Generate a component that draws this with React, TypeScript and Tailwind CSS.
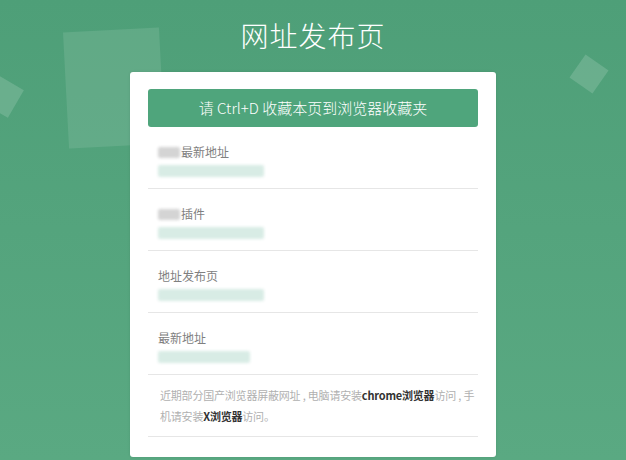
import React from "react";

const Blur = ({ w, cls = "" }: { w: number; cls?: string }) => (
  <span
    className={"inline-block align-middle rounded-[2px] blur-[1.5px] " + cls}
    style={{ width: w }}
  />
);

function Row({ label, pre, urlW }: { label: string; pre: number; urlW: number }) {
  return (
    <div className="px-[10px] pt-[18px] pb-[11px] border-b border-[#e6e6e6]">
      <div className="flex items-center h-[14px] text-[12px] leading-[14px] text-[#808080]">
        {pre > 0 && <Blur w={pre} cls="h-[11px] bg-[#d4d4d4] mr-[1px]" />}
        <span>{label}</span>
      </div>
      <div className="mt-[6px] h-[12px] flex items-center">
        <Blur w={urlW} cls="h-[12px] bg-[#d8ece5]" />
      </div>
    </div>
  );
}

export default function App() {
  return (
    <div
      className="relative w-full h-[460px] overflow-hidden bg-gradient-to-b from-[#4e9f78] to-[#5aa982]"
      style={{ fontFamily: '"Noto Sans CJK SC", "Noto Sans", sans-serif' }}
    >
      <div className="absolute left-[66px] top-[30px] w-[96px] h-[116px] bg-white/10 -rotate-3" />
      <div className="absolute left-[-14px] top-[80px] w-[32px] h-[32px] bg-white/15 rotate-[30deg]" />
      <div className="absolute left-[575px] top-[60px] w-[28px] h-[28px] bg-white/15 rotate-[35deg]" />

      <div className="relative pt-[15px] text-center text-white text-[28px] leading-[40px] font-light tracking-[1px]">
        网址发布页
      </div>

      <div className="relative mx-auto mt-[17px] w-[366px] bg-white rounded-[3px] px-[18px] pt-[17px] pb-[20px] shadow-[0_0_3px_rgba(0,0,0,0.1)]">
        <div className="h-[38px] rounded-[3px] bg-[#4fa57c] text-white text-[15px] font-light flex items-center justify-center">
          请 Ctrl+D 收藏本页到浏览器收藏夹
        </div>
        <Row label="最新地址" pre={22} urlW={106} />
        <Row label="插件" pre={22} urlW={106} />
        <Row label="地址发布页" pre={0} urlW={106} />
        <Row label="最新地址" pre={0} urlW={92} />
        <div className="pl-[12px] pr-[1px] pt-[10px] pb-[9px] border-b border-[#e6e6e6] text-[11px] leading-[21px] tracking-[-0.2px] text-[#b0b0b0]">
          近期部分国产浏览器屏蔽网址 , 电脑请安装
          <b className="text-[#333] font-bold">chrome浏览器</b>
          访问 , 手机请安装
          <b className="text-[#333] font-bold">X浏览器</b>
          访问。
        </div>
      </div>
    </div>
  );
}
